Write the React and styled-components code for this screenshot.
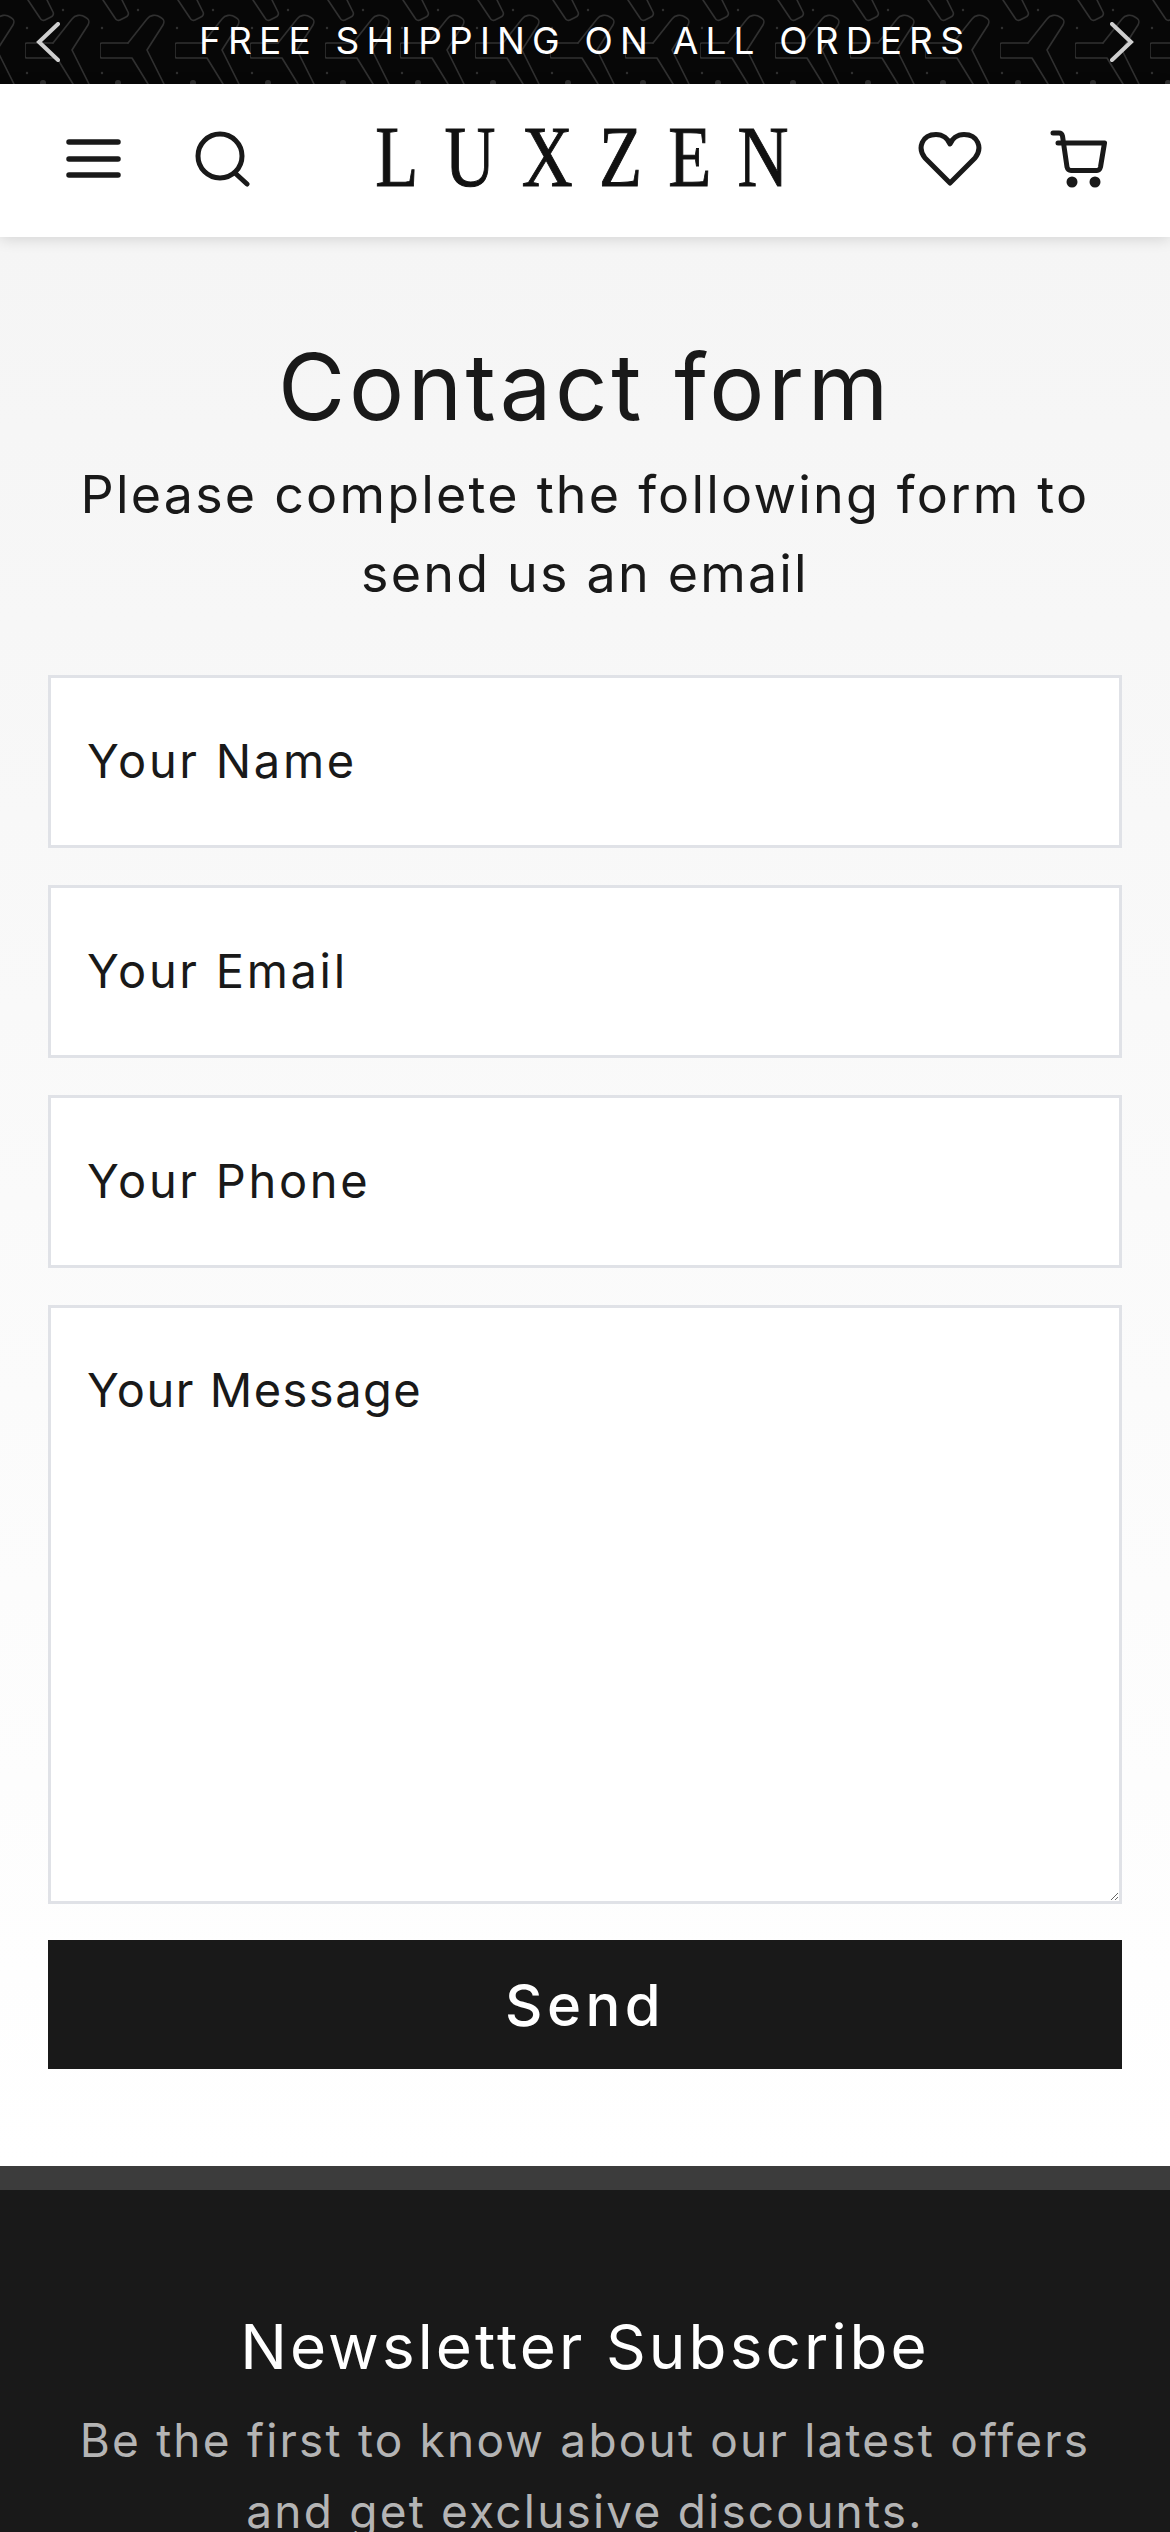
import styled, { createGlobalStyle } from "styled-components";

const GlobalStyle = createGlobalStyle`
  html, body {
    margin: 0;
    padding: 0;
    height: 2532px;
    overflow: hidden;
  }

  body {
    font-family: "Inter", "Noto Sans", sans-serif;
    color: #191919;
    background: #fff;
  }

  * {
    box-sizing: border-box;
  }
`;

const TopBar = styled.div`
  position: relative;
  display: flex;
  align-items: center;
  justify-content: space-between;
  height: 84px;
  padding: 0 36px;
  background: #070707;
  overflow: hidden;
`;

const Pattern = styled.svg`
  position: absolute;
  inset: 0;
  width: 100%;
  height: 100%;
`;

const TopText = styled.p`
  position: relative;
  margin: 0 0 3px;
  color: #fff;
  font-size: 37px;
  font-weight: 400;
  letter-spacing: 7.2px;
  white-space: nowrap;
`;

const Arrow = styled.svg`
  position: relative;
  width: 24px;
  height: 40px;
  fill: none;
  stroke: #cfcfcf;
  stroke-width: 4;
  stroke-linecap: round;
`;

const Header = styled.header`
  position: relative;
  display: grid;
  grid-template-columns: 1fr auto 1fr;
  align-items: center;
  height: 153px;
  padding: 0 63px 3px 66px;
  background: #fff;
  box-shadow: 0 2px 14px rgba(0, 0, 0, 0.14);
`;

const IconGroup = styled.div`
  display: flex;
  align-items: center;
  gap: ${(p) => (p.$end ? "68px" : "74px")};
  justify-content: ${(p) => (p.$end ? "flex-end" : "flex-start")};
`;

const Icon = styled.svg`
  display: block;
  width: ${(p) => p.$w}px;
  height: 60px;
  fill: none;
  stroke: #191919;
  stroke-width: 5;
  stroke-linecap: round;
  stroke-linejoin: round;
`;

const Logo = styled.div`
  font-family: "Liberation Serif", serif;
  font-size: 86px;
  line-height: 1;
  letter-spacing: 32px;
  margin: 0 -32px 5px -16px;
  color: #111;
  -webkit-text-stroke: 1px #111;
  transform: scaleX(0.82);
`;

const Main = styled.main`
  padding: 95px 48px 96px;
  height: 1929px;
  background: linear-gradient(#f5f5f5, #fff);
`;

const Title = styled.h1`
  margin: 0;
  font-size: 92px;
  font-weight: 400;
  line-height: 110px;
  text-align: center;
  letter-spacing: 3.6px;
`;

const Intro = styled.p`
  margin: 13px 0 62px;
  font-size: 52px;
  line-height: 79px;
  text-align: center;
  letter-spacing: 2.2px;
`;

const Form = styled.form`
  display: flex;
  flex-direction: column;
  gap: 37px;
`;

const fieldStyles = `
  display: block;
  width: 100%;
  border: 3px solid #e0e2e7;
  border-radius: 0;
  background: #fff;
  padding: 0 36px;
  font-family: "Inter", "Noto Sans", sans-serif;
  font-size: 47px;
  letter-spacing: 2.7px;
  color: #191919;
  outline: none;

  &::placeholder {
    color: #191919;
    opacity: 1;
  }
`;

const Field = styled.input`
  ${fieldStyles}
  height: 173px;
  padding-bottom: 3px;
`;

const Message = styled.textarea`
  ${fieldStyles}
  height: 599px;
  padding-top: 53px;
  line-height: 58px;
  letter-spacing: 1.5px;
`;

const SendButton = styled.button`
  height: 129px;
  margin-top: -1px;
  border: 0;
  background: #191919;
  color: #fff;
  font-family: "Inter", "Noto Sans", sans-serif;
  font-size: 58px;
  font-weight: 500;
  letter-spacing: 4.4px;
`;

const Footer = styled.footer`
  height: 366px;
  padding: 118px 48px 0;
  border-top: 24px solid #3c3c3c;
  background: #191919;
  text-align: center;
`;

const FooterTitle = styled.h2`
  margin: 0;
  color: #fff;
  font-size: 62px;
  font-weight: 400;
  line-height: 78px;
  letter-spacing: 3.1px;
`;

const FooterText = styled.p`
  margin: 19px 0 0;
  color: #b4b4b4;
  font-size: 46px;
  line-height: 71px;
  letter-spacing: 2.2px;
`;

function TopPattern() {
  return (
    <Pattern aria-hidden="true">
      <defs>
        <pattern id="bar-pattern" width="75" height="84" patternUnits="userSpaceOnUse" x="25">
          <g fill="none" stroke="#303030" strokeWidth="1.6" strokeLinecap="round" strokeLinejoin="round">
            <path d="M28 43H2Q0 43 0 45V56Q0 58 2 58H32L48 84" />
            <path d="M28 43L47 19C50 15 56 14 60 17C64 19 65 21 63 25L47 50L64 84" />
            <path d="M3 0L15 18C16 20 18 21 20 20L26 17C28 16 29 14 28 12L22 0" />
          </g>
          <g fill="#303030">
            <circle cx="38" cy="10" r="1.2" />
            <circle cx="2" cy="28" r="1.2" />
            <circle cx="2" cy="73" r="1.2" />
            <circle cx="18" cy="83" r="3" />
          </g>
        </pattern>
      </defs>
      <rect width="100%" height="100%" fill="url(#bar-pattern)" />
    </Pattern>
  );
}

export default function App() {
  return (
    <>
      <GlobalStyle />
      <TopBar>
        <TopPattern />
        <Arrow viewBox="0 0 24 40">
          <path d="M22 2L3 20L22 38" />
        </Arrow>
        <TopText>FREE SHIPPING ON ALL ORDERS</TopText>
        <Arrow viewBox="0 0 24 40">
          <path d="M2 2L21 20L2 38" />
        </Arrow>
      </TopBar>
      <Header>
        <IconGroup>
          <Icon $w={55} viewBox="0 0 55 60">
            <path d="M3 13H52M3 30H52M3 46H52" strokeWidth="5.5" />
          </Icon>
          <Icon $w={55} viewBox="0 0 55 60">
            <circle cx="25" cy="27" r="22" />
            <path d="M40 44L52 55" />
          </Icon>
        </IconGroup>
        <Logo>LUXZEN</Logo>
        <IconGroup $end>
          <Icon $w={64} viewBox="0 0 64 60">
            <path d="M32 54L7 29C-1 19 4 5.5 18 5.5C25 5.5 30 10 32 15C34 10 39 5.5 46 5.5C60 5.5 65 19 57 29Z" />
          </Icon>
          <Icon $w={57} viewBox="0 0 57 60">
            <path d="M3 4H9C11 4 12 5 12.5 7L17 38C17.5 40 19 41.5 21 41.5H47C49 41.5 50 40 50.5 38L54.5 14H8" />
            <circle cx="22" cy="53" r="5.5" fill="#191919" stroke="none" />
            <circle cx="45" cy="53" r="5.5" fill="#191919" stroke="none" />
          </Icon>
        </IconGroup>
      </Header>
      <Main>
        <Title>Contact form</Title>
        <Intro>
          Please complete the following form to
          <br />
          send us an email
        </Intro>
        <Form>
          <Field placeholder="Your Name" />
          <Field placeholder="Your Email" />
          <Field placeholder="Your Phone" />
          <Message placeholder="Your Message" />
          <SendButton type="button">Send</SendButton>
        </Form>
      </Main>
      <Footer>
        <FooterTitle>Newsletter Subscribe</FooterTitle>
        <FooterText>
          Be the first to know about our latest offers
          <br />
          and get exclusive discounts.
        </FooterText>
      </Footer>
    </>
  );
}
